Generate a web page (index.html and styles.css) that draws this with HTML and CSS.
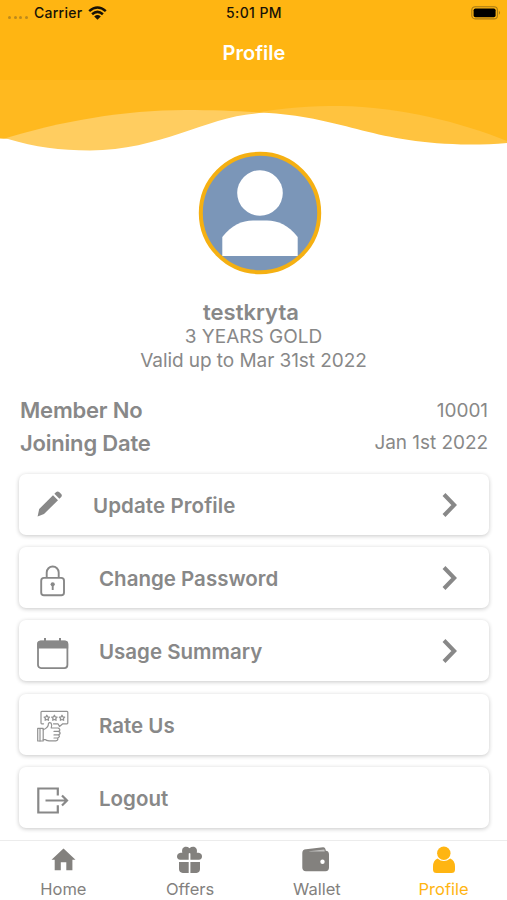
FILE: index.html
```html
<!DOCTYPE html>
<html lang="en">
<head>
    <meta charset="UTF-8">
    <meta name="viewport" content="width=device-width, initial-scale=1.0">
    <title>Profile</title>
    <link rel="stylesheet" href="styles.css">
</head>
<body>
    <header class="header">
        <div class="status-bar">
            <div class="carrier">
                <span class="signal"><i></i><i></i><i></i><i></i></span>
                <span class="carrier-name">Carrier</span>
                <svg width="19" height="14" viewBox="0 0 19 14">
                    <g fill="none" stroke="#171206" stroke-width="2.5">
                        <path d="M1.2 5.1Q9.5-2.2 17.8 5.1"/>
                        <path d="M4.1 8.3Q9.5 3.5 14.9 8.3"/>
                    </g>
                    <path d="M6.2 10.4Q9.5 7.6 12.8 10.4L9.5 13.7z" fill="#171206"/>
                </svg>
            </div>
            <div class="clock">5:01 PM</div>
            <div class="battery">
                <svg width="30" height="14" viewBox="0 0 30 14">
                    <rect x="0.8" y="0.7" width="25.6" height="12.2" rx="3.4" fill="none" stroke="#a77a14" stroke-width="1.1"/>
                    <rect x="2.6" y="2.5" width="22" height="8.7" rx="1.8" fill="#000"/>
                    <path d="M27.9 4.8Q30.2 6.8 27.9 8.8z" fill="#a77a14"/>
                </svg>
            </div>
        </div>
        <h1 class="title">Profile</h1>
    </header>
    <svg class="wave" width="507" height="72" viewBox="0 0 507 72">
        <rect width="507" height="72" fill="#ffb91f"/>
        <path d="M0 60C60 41 125 30 185 30C215 30 240 31 264 33L264 72H0z" fill="#ffcd60"/>
        <path d="M250 34C280 28 310 26 340 26C400 27 460 42 507 61V72H250z" fill="#ffc33f"/>
        <path d="M0 58.5L8 59C35 67 60 70.500 90 70.500C160 70 205 38 255 33.500Q261 32.500 269 33C345 38 375 64 470 64.500Q490 64.500 507 63V72H0z" fill="#fff"/>
    </svg>
    <main class="main">
        <section class="user">
            <svg class="avatar" width="124" height="124" viewBox="0 0 124 124">
                <circle cx="62" cy="62" r="59.2" fill="#7b96b8" stroke="#f5b012" stroke-width="4"/>
                <circle cx="62" cy="42" r="22.8" fill="#fff"/>
                <path d="M24.3 105V86C34 74 44 69.500 55 69.500H69C80 69.500 90 74 99.700 86V105z" fill="#fff"/>
            </svg>
            <h2 class="user-name">testkryta</h2>
            <p class="plan">3 YEARS GOLD</p>
            <p class="valid">Valid up to Mar 31st 2022</p>
        </section>
        <dl class="details">
            <div class="detail">
                <dt>Member No</dt>
                <dd>10001</dd>
            </div>
            <div class="detail">
                <dt>Joining Date</dt>
                <dd>Jan 1st 2022</dd>
            </div>
        </dl>
        <nav class="menu">
            <a class="card update" href="#">
                <svg class="icon" width="34" height="34" viewBox="0 0 34 34">
                    <path d="M1.600 28.500L3.200 21L17 7.200L22 12.200L8 26z M18.400 5.800L20.200 4Q21.800 2.800 23.400 4.200L25.200 6Q26.500 7.600 25.200 9.100L23.400 10.800z" fill="#888"/>
                </svg>
                <span class="label">Update Profile</span>
                <svg class="chevron" width="18" height="26" viewBox="0 0 18 26"><path d="M3 2.500L13.200 13L3 23.500"/></svg>
            </a>
            <a class="card" href="#">
                <svg class="icon" width="34" height="34" viewBox="0 0 34 34" fill="none" stroke="#888" stroke-width="1.900">
                    <rect x="5.200" y="13.900" width="22.800" height="17.300" rx="2.800"/>
                    <path d="M10.700 13.500V8.500A6 6 0 0 1 22.700 8.500V13.500"/>
                    <circle cx="16.700" cy="20.300" r="2.100" fill="#888" stroke="none"/>
                    <path d="M16.700 20.500V26"/>
                </svg>
                <span class="label">Change Password</span>
                <svg class="chevron" width="18" height="26" viewBox="0 0 18 26"><path d="M3 2.500L13.200 13L3 23.500"/></svg>
            </a>
            <a class="card" href="#">
                <svg class="icon" width="34" height="34" viewBox="0 0 34 34">
                    <rect x="2" y="4.500" width="29.400" height="26.600" rx="3" fill="none" stroke="#888" stroke-width="1.800"/>
                    <path d="M1.200 11.500V6.500Q1.200 3.700 4.200 3.700H8V1H10V3.700H23V1H25V3.700H29Q32.200 3.700 32.200 6.500V11.500z" fill="#888"/>
                </svg>
                <span class="label">Usage Summary</span>
                <svg class="chevron" width="18" height="26" viewBox="0 0 18 26"><path d="M3 2.500L13.200 13L3 23.500"/></svg>
            </a>
            <a class="card" href="#">
                <svg class="icon" width="34" height="34" viewBox="0 0 34 34" fill="none" stroke="#929292" stroke-width="1.200" stroke-linejoin="round" stroke-linecap="round">
                    <path d="M7.500 13.800H5.800Q5 13.800 5 13V2.300Q5 1.400 5.900 1.400H31Q31.800 1.400 31.800 2.300V13Q31.800 13.800 31 13.800H26.800L23.500 16.500L22 13.800H17.500"/>
                    <path id="star" d="M10.800 5.200L11.700 6.900L13.500 7.200L12.200 8.500L12.500 10.300L10.800 9.500L9.100 10.300L9.400 8.500L8.100 7.200L9.900 6.900z"/>
                    <use href="#star" x="7.600"/>
                    <use href="#star" x="15.200"/>
                    <rect x="1.700" y="18.300" width="5.500" height="12.700"/>
                    <path d="M4 18.500V31M7.200 19.700C11 18.500 12.500 16.500 12.500 13.300Q13.500 11.900 15.200 13.300Q16.300 14.800 15.200 18H22.200Q25.300 19.700 22.600 21.400Q25.800 23.100 22.500 24.900Q24.800 26.500 21.700 28Q22.500 30.500 19.800 30.800H13Q10 30.500 9.500 29.600H7.200M18 21.400H22.600M18 24.900H22.500M18 28H21.700"/>
                </svg>
                <span class="label">Rate Us</span>
            </a>
            <a class="card" href="#">
                <svg class="icon" width="34" height="34" viewBox="0 0 34 34" fill="none" stroke="#888" stroke-width="2.200">
                    <path d="M21.800 11.500V4.500H2.300V28.500H21.800V21.300M9.500 16.500H31M26 11.500L31 16.500L26 21.500"/>
                </svg>
                <span class="label">Logout</span>
            </a>
        </nav>
    </main>
    <footer class="tabs">
        <a class="tab" href="#">
            <svg width="28" height="28" viewBox="0 0 28 28" fill="#83817e">
                <path d="M14.500 2.500L26.500 13.800H23.400V24.200H17.300V16.300H11.800V24.200H5.700V13.800H2.500z"/>
            </svg>
            <span>Home</span>
        </a>
        <a class="tab" href="#">
            <svg width="28" height="28" viewBox="0 0 28 28" fill="#83817e">
                <path d="M12.700 13.800H4.200Q1 13.500 1 10.500Q1.200 7.300 4.500 6.800H6.300C5.500 3 7 .8 10 .8Q12 .8 13.500 2.200Q15 .8 17 .8C20 .8 21.600 3.300 20.800 6.800H22.500Q26 7.300 26 10.500Q26 13.500 22.900 13.800H14.400V7.500Q13.500 6.600 12.700 7.500z"/>
                <path d="M3 16H12.700V27H6.800Q3 26.600 3 23zM14.400 16H24V23Q24 26.600 20.500 27H14.400z"/>
            </svg>
            <span>Offers</span>
        </a>
        <a class="tab" href="#">
            <svg width="28" height="28" viewBox="0 0 28 28" fill="#83817e">
                <path d="M-.7 7Q-.7 3.500 3 3.200L20 1.200Q22.500 1 22.800 4.700Q26 5 26 8.500V21.500Q26 25.200 22.500 25.200H3Q-.7 25.200-.7 21.500z"/>
                <path d="M6 5.200L21.300 3.500L21.800 5.600H6.500Z" fill="#c4c3c1"/>
                <circle cx="19.500" cy="15.700" r="2.200" fill="#fff"/>
            </svg>
            <span>Wallet</span>
        </a>
        <a class="tab active" href="#">
            <svg width="28" height="28" viewBox="0 0 28 28" fill="#ffb512">
                <circle cx="13.800" cy="7.300" r="6.700"/>
                <path d="M7.500 12.500Q13.800 17.500 20.200 12.500Q25 14.500 25 20.500V23.500Q25 27 21.500 27H6.500Q3 27 3 23.500V20.500Q3 14.500 7.500 12.500z"/>
            </svg>
            <span>Profile</span>
        </a>
    </footer>
</body>
</html>
```
FILE: styles.css
```css
* {
    box-sizing: border-box;
}
body {
    margin: 0;
    width: 507px;
    height: 900px;
    overflow: hidden;
    display: flex;
    flex-direction: column;
    font-family: 'Inter', 'Liberation Sans', sans-serif;
    color: #888;
    background-color: #fff;
}
h1, h2, p, dl, dd {
    margin: 0;
    font-weight: 400;
}
a {
    color: inherit;
    text-decoration: none;
}
svg {
    display: block;
    flex-shrink: 0;
    overflow: visible;
}
.header {
    height: 80px;
    flex-shrink: 0;
    background-color: #ffb512;
}
.status-bar {
    height: 26px;
    display: grid;
    grid-template-columns: 1fr 1fr 1fr;
    align-items: center;
    padding: 0 6px 0 8px;
    color: #171206;
    font-size: 14px;
    font-weight: 500;
}
.carrier {
    display: flex;
    align-items: center;
    gap: 6px;
}
.carrier-name {
    letter-spacing: 0.25px;
    margin-top: -1px;
}
.signal {
    display: flex;
    gap: 2.700px;
    padding-top: 9px;
}
.signal i {
    width: 3px;
    height: 3px;
    border-radius: 50%;
    background-color: #bd8a1c;
}
.clock {
    text-align: center;
    letter-spacing: 0.400px;
    margin: -1px 0 0 -1px;
}
.battery {
    justify-self: end;
}
.title {
    text-align: center;
    color: #fff;
    font-size: 20px;
    font-weight: 600;
    line-height: 54px;
    padding-left: 1px;
}
.main {
    flex: 1;
    padding: 0 18px 0 19px;
}
.user {
    text-align: center;
    padding-right: 1px;
    height: 242.500px;
}
.avatar {
    margin: -0.700px auto 24px 179px;
}
.user-name {
    font-size: 22px;
    font-weight: 600;
    line-height: 26px;
    padding-right: 5px;
}
.plan, .valid {
    font-size: 19px;
    line-height: 24px;
}
.valid {
    letter-spacing: -0.060px;
}
.details {
    height: 80px;
    padding: 0 1px;
}
.detail {
    display: flex;
    justify-content: space-between;
    align-items: center;
    height: 32.500px;
}
.detail dt {
    font-size: 22px;
    font-weight: 600;
    letter-spacing: -0.200px;
}
.detail dd {
    font-size: 19px;
    letter-spacing: -0.050px;
}
.menu {
    display: flex;
    flex-direction: column;
    gap: 12.300px;
}
.card {
    display: flex;
    align-items: center;
    height: 61px;
    padding: 1px 30px 0 17px;
    border-radius: 7px;
    background-color: #fff;
    box-shadow: 0 1px 4px rgba(0, 0, 0, 0.22);
}
.icon {
    margin: 5px 29px 0 0;
}
.label {
    flex: 1;
    font-size: 20.500px;
    font-weight: 600;
    padding-top: 1px;
}
.update .icon {
    margin: 1px 23px 0 0;
}
.update .label {
    letter-spacing: 0.100px;
}
.chevron {
    fill: none;
    stroke: #888;
    stroke-width: 4;
}
.tabs {
    height: 60px;
    flex-shrink: 0;
    display: grid;
    grid-template-columns: repeat(4, 1fr);
    border-top: 1px solid #ececec;
    background-color: #fff;
}
.tab {
    display: flex;
    flex-direction: column;
    align-items: center;
    padding-top: 5px;
    font-size: 16.500px;
    line-height: 30px;
    color: #83817e;
}
.active {
    color: #ffb512;
}
```
